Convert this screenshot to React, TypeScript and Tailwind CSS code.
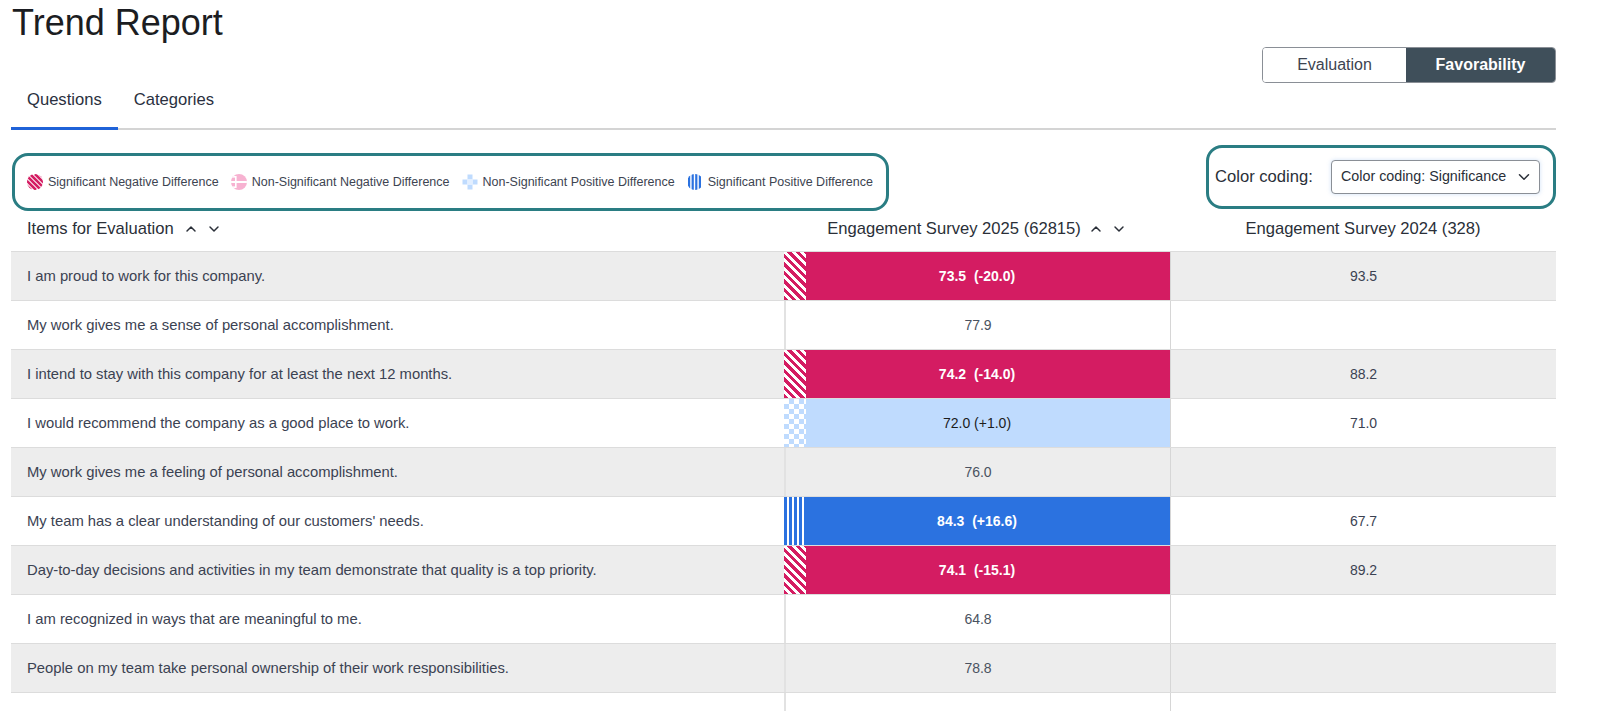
import React from "react";
import { ChevronUp, ChevronDown } from "lucide-react";

type Kind = "sn" | "nn" | "np" | "sp" | "none";

const rows: { q: string; v: string; d?: string; t: Kind; p: string }[] = [
  { q: "I am proud to work for this company.", v: "73.5", d: "(-20.0)", t: "sn", p: "93.5" },
  { q: "My work gives me a sense of personal accomplishment.", v: "77.9", t: "none", p: "" },
  { q: "I intend to stay with this company for at least the next 12 months.", v: "74.2", d: "(-14.0)", t: "sn", p: "88.2" },
  { q: "I would recommend the company as a good place to work.", v: "72.0", d: "(+1.0)", t: "np", p: "71.0" },
  { q: "My work gives me a feeling of personal accomplishment.", v: "76.0", t: "none", p: "" },
  { q: "My team has a clear understanding of our customers' needs.", v: "84.3", d: "(+16.6)", t: "sp", p: "67.7" },
  { q: "Day-to-day decisions and activities in my team demonstrate that quality is a top priority.", v: "74.1", d: "(-15.1)", t: "sn", p: "89.2" },
  { q: "I am recognized in ways that are meaningful to me.", v: "64.8", t: "none", p: "" },
  { q: "People on my team take personal ownership of their work responsibilities.", v: "78.8", t: "none", p: "" },
  { q: "", v: "", t: "none", p: "" },
];

function SigNegIcon() {
  return (
    <svg width="16" height="16" viewBox="0 0 16 16">
      <defs>
        <clipPath id="c1">
          <circle cx="8" cy="8" r="8" />
        </clipPath>
      </defs>
      <g clipPath="url(#c1)">
        <rect width="16" height="16" fill="#ffffff" />
        {[-12, -7, -2, 3, 8, 13, 18].map((o) => (
          <line key={o} x1={o} y1={0} x2={o + 16} y2={16} stroke="#d41c62" strokeWidth="2.6" />
        ))}
      </g>
    </svg>
  );
}

function NonSigNegIcon() {
  return (
    <svg width="16" height="16" viewBox="0 0 16 16">
      <defs>
        <clipPath id="c2">
          <circle cx="8" cy="8" r="8" />
        </clipPath>
      </defs>
      <g clipPath="url(#c2)">
        <rect width="16" height="16" fill="#f7b2d1" />
        <rect x="0" y="7" width="16" height="2" fill="#ffffff" />
        <rect x="4" y="2" width="1.6" height="12" fill="#ffffff" />
        <rect x="0" y="2" width="4" height="1.6" fill="#ffffff" />
        <rect x="0" y="12.4" width="4" height="1.6" fill="#ffffff" />
      </g>
    </svg>
  );
}

function NonSigPosIcon() {
  return (
    <svg width="16" height="16" viewBox="0 0 16 16">
      <rect x="5.5" y="0.5" width="5" height="5" fill="#bfdbfe" />
      <rect x="0.5" y="5.5" width="5" height="5" fill="#bfdbfe" />
      <rect x="10.5" y="5.5" width="5" height="5" fill="#bfdbfe" />
      <rect x="5.5" y="10.5" width="5" height="5" fill="#bfdbfe" />
      <rect x="5.5" y="5.5" width="5" height="5" fill="#e3efff" />
    </svg>
  );
}

function SigPosIcon() {
  return (
    <svg width="16" height="16" viewBox="0 0 16 16">
      <defs>
        <clipPath id="c4">
          <circle cx="8" cy="8" r="8" />
        </clipPath>
      </defs>
      <g clipPath="url(#c4)">
        <rect width="16" height="16" fill="#ffffff" />
        {[1, 4.6, 8.2, 11.8].map((x) => (
          <rect key={x} x={x} y={0} width="2.2" height="16" fill="#2b72e0" />
        ))}
      </g>
    </svg>
  );
}

function LegendItem({ icon, label }: { icon: React.ReactNode; label: string }) {
  return (
    <div className="flex items-center gap-[5px]">
      {icon}
      <span className="text-[12.5px] text-[#3d4451]">{label}</span>
    </div>
  );
}

function ValueCell({ r }: { r: (typeof rows)[number] }) {
  if (r.t === "none") {
    return (
      <div className="flex h-full items-center justify-center border-l-2 border-[#e2e2e2] text-[14px] text-[#4a5260]">
        {r.v}
      </div>
    );
  }
  const bg =
    r.t === "sn" ? "bg-[#d41c62] text-white font-semibold" : r.t === "sp" ? "bg-[#2b72e0] text-white font-semibold" : "bg-[#bfdbfe] text-[#1c1c1c]";
  const pat =
    r.t === "sn"
      ? "[background-image:repeating-linear-gradient(45deg,#d41c62_0px,#d41c62_3px,#ffffff_3px,#ffffff_6px)]"
      : r.t === "sp"
      ? "[background-image:repeating-linear-gradient(90deg,#2b72e0_0px,#2b72e0_3px,#ffffff_3px,#ffffff_5px)]"
      : "[background-image:conic-gradient(#bfdbfe_25%,#ffffff_0_50%,#bfdbfe_0_75%,#ffffff_0)] [background-size:10px_10px]";
  return (
    <div className={`relative flex h-full items-center justify-center text-[14px] ${bg}`}>
      <div className={`absolute left-0 top-0 h-full w-[22px] ${pat}`} />
      <span>
        {r.v}
        {r.t === "np" ? " " : "\u00a0\u00a0"}
        {r.d}
      </span>
    </div>
  );
}

export default function App() {
  return (
    <div className="min-h-screen bg-white font-['Liberation_Sans',Arial,sans-serif] text-[#2a2f38]">
      <div className="ml-[11px] w-[1545px]">
        {/* Top */}
        <div className="flex justify-between border-b-2 border-[#d4d4d4]">
          <div>
            <h1 className="h-[48px] pl-[1px] pt-[3px] text-[36px] leading-[40px] text-[#1b1d22]">Trend Report</h1>
            <div className="mt-[24px] flex">
              <div className="-mb-[2px] flex h-[58px] items-center border-b-[3px] border-[#1f62d8] px-[16px] pt-[1px] text-[16.6px] text-[#2a3040]">
                Questions
              </div>
              <div className="flex h-[56px] items-center px-[16px] text-[16.6px] text-[#2a3040]">Categories</div>
            </div>
          </div>
          <div className="mt-[47px] flex h-[36px] overflow-hidden rounded-[4px] border border-[#8a8f96]">
            <div className="flex w-[143px] items-center justify-center bg-white text-[16px] text-[#3d4451]">Evaluation</div>
            <div className="flex w-[149px] items-center justify-center bg-[#3f4f5a] text-[16px] font-bold text-white">
              Favorability
            </div>
          </div>
        </div>

        {/* Legend row */}
        <div className="flex items-start justify-between">
          <div className="ml-[1px] mt-[23px] flex h-[58px] w-[877px] items-center gap-[12px] rounded-[16px] border-[3px] border-[#2a7d83] pl-[12px]">
            <LegendItem icon={<SigNegIcon />} label="Significant Negative Difference" />
            <LegendItem icon={<NonSigNegIcon />} label="Non-Significant Negative Difference" />
            <LegendItem icon={<NonSigPosIcon />} label="Non-Significant Positive Difference" />
            <LegendItem icon={<SigPosIcon />} label="Significant Positive Difference" />
          </div>
          <div className="mt-[15px] flex h-[64px] w-[350px] items-center justify-between rounded-[16px] border-[3px] border-[#2a7d83] pl-[6px] pr-[13px]">
            <span className="text-[16.6px] text-[#2a2f38]">Color coding:</span>
            <div className="flex h-[34px] w-[209px] items-center justify-between rounded-[4px] border border-[#8a8f96] bg-white pl-[9px] pr-[6px] shadow-[0_0_4px_rgba(120,170,230,0.35)]">
              <span className="text-[14.3px] text-[#2a2f38]">Color coding: Significance</span>
              <ChevronDown size={18} strokeWidth={2} color="#2a2f38" />
            </div>
          </div>
        </div>

        {/* Header */}
        <div className="grid h-[40px] grid-cols-[773px_386px_386px] pb-[4px]">
          <div className="flex items-center gap-[7px] pl-[16px] text-[16.6px] text-[#2a2f38]">
            <span>Items for Evaluation</span>
            <span className="ml-[2px] flex items-center gap-[7px]">
              <ChevronUp size={16} strokeWidth={2.2} color="#2a2f38" />
              <ChevronDown size={16} strokeWidth={2.2} color="#2a2f38" />
            </span>
          </div>
          <div className="flex items-center justify-center gap-[7px] text-[16.6px] text-[#2a2f38]">
            <span>Engagement Survey 2025 (62815)</span>
            <span className="flex items-center gap-[7px]">
              <ChevronUp size={16} strokeWidth={2.2} color="#2a2f38" />
              <ChevronDown size={16} strokeWidth={2.2} color="#2a2f38" />
            </span>
          </div>
          <div className="flex items-center justify-center text-[16.6px] text-[#2a2f38]">Engagement Survey 2024 (328)</div>
        </div>

        {/* Rows */}
        <div className="border-t border-[#dcdcdc]">
          {rows.map((r, i) => (
            <div
              key={i}
              className={`grid h-[49px] grid-cols-[773px_386px_386px] border-b border-[#dcdcdc] ${i % 2 === 0 ? "bg-[#ededed]" : "bg-white"}`}
            >
              <div className="flex items-center pl-[16px] text-[14.8px] text-[#3b4252]">{r.q}</div>
              <ValueCell r={r} />
              <div className="flex items-center justify-center border-l border-[#d6d6d6] text-[14px] text-[#3b4252]">{r.p}</div>
            </div>
          ))}
        </div>
      </div>
    </div>
  );
}
